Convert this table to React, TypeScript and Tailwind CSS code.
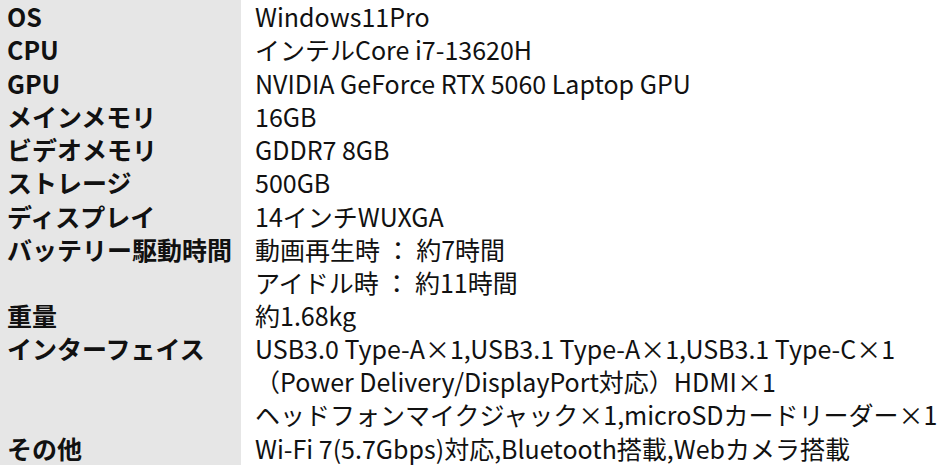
const specs: { label: string; lines: string[] }[] = [
  { label: "OS", lines: ["Windows11Pro"] },
  { label: "CPU", lines: ["インテルCore i7-13620H"] },
  { label: "GPU", lines: ["NVIDIA GeForce RTX 5060 Laptop GPU"] },
  { label: "メインメモリ", lines: ["16GB"] },
  { label: "ビデオメモリ", lines: ["GDDR7 8GB"] },
  { label: "ストレージ", lines: ["500GB"] },
  { label: "ディスプレイ", lines: ["14インチWUXGA"] },
  { label: "バッテリー駆動時間", lines: ["動画再生時 ： 約7時間", "アイドル時 ： 約11時間"] },
  { label: "重量", lines: ["約1.68kg"] },
  {
    label: "インターフェイス",
    lines: [
      "USB3.0 Type-A×1,USB3.1 Type-A×1,USB3.1 Type-C×1",
      "（Power Delivery/DisplayPort対応）HDMI×1",
      "ヘッドフォンマイクジャック×1,microSDカードリーダー×1",
    ],
  },
  { label: "その他", lines: ["Wi-Fi 7(5.7Gbps)対応,Bluetooth搭載,Webカメラ搭載"] },
];

export default function App() {
  return (
    <div
      className="w-[943px] h-[465px] bg-white overflow-hidden grid grid-cols-[241px_1fr] text-[25px] leading-[33px] text-[#111]"
      style={{ fontFamily: '"Noto Sans CJK JP", "Noto Sans", sans-serif' }}
    >
      {specs.map((s) => (
        <div key={s.label} className="contents">
          <div className="bg-[#e6e6e6] pl-[7px] font-bold">{s.label}</div>
          <div className="pl-[14px] whitespace-nowrap">
            {s.lines.map((l) => (
              <div key={l}>{l}</div>
            ))}
          </div>
        </div>
      ))}
      <div className="bg-[#e6e6e6] h-full" />
      <div />
    </div>
  );
}
